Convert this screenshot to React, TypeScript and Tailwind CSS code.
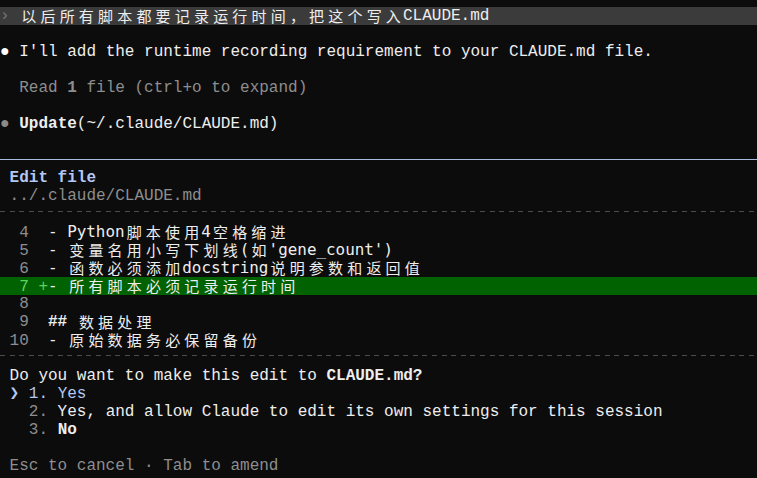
import React from 'react';

const isWide = (c: string) => /[\u2e80-\u9fff\uff00-\uffef]/.test(c);

// render text on the terminal grid: CJK glyphs take two cells
const Cells: React.FC<{ text: string; alt?: boolean }> = ({ text, alt }) => {
  const parts: React.ReactNode[] = [];
  let buf = '';
  const flush = (k: number) => {
    if (buf) {
      parts.push(
        <span key={'a' + k} className={alt ? "font-[family-name:'DejaVu_Sans_Mono',monospace] text-[15.9px]" : ''}>
          {buf}
        </span>
      );
      buf = '';
    }
  };
  Array.from(text).forEach((c, i) => {
    if (isWide(c)) {
      flush(i);
      parts.push(
        <span key={i} className="inline-block w-[19.2px] align-top text-center leading-[17px] font-[family-name:'Noto_Sans_CJK_SC',sans-serif] text-[15px]">
          {c}
        </span>
      );
    } else {
      buf += c;
    }
  });
  flush(text.length);
  return <>{parts}</>;
};

const Row: React.FC<{ children?: React.ReactNode; className?: string }> = ({ children, className = '' }) => (
  <div className={`h-[18px] whitespace-pre ${className}`}>{children}</div>
);

const diff = [
  { n: '4', sign: ' ', text: '- Python脚本使用4空格缩进' },
  { n: '5', sign: ' ', text: "- 变量名用小写下划线(如'gene_count')" },
  { n: '6', sign: ' ', text: '- 函数必须添加docstring说明参数和返回值' },
  { n: '7', sign: '+', text: '- 所有脚本必须记录运行时间', added: true },
  { n: '8', sign: ' ', text: '' },
  { n: '9', sign: ' ', text: '## 数据处理', heading: true },
  { n: '10', sign: ' ', text: '- 原始数据务必保留备份' },
];

const Dashed = () => (
  <Row className="flex items-start">
    <div className="mt-[6px] h-px w-full bg-[repeating-linear-gradient(90deg,#4c4c4c_0_5px,transparent_5px_9.6px)]" />
  </Row>
);

export default function App() {
  return (
    <div className="w-[757px] h-[478px] overflow-hidden bg-[#0c0c0c] pt-[7px] text-[16px] leading-[18px] text-[#eeeeee] font-[family-name:'Liberation_Mono','Noto_Sans_CJK_SC',monospace]">
      <Row className="bg-[#3b3b3b]">
        <span className="text-[#777]">›</span> <Cells text="以后所有脚本都要记录运行时间，把这个写入" />CLAUDE.md
      </Row>
      <Row />
      <Row>
        <span className="text-white">●</span> I'll add the runtime recording requirement to your CLAUDE.md file.
      </Row>
      <Row />
      <Row className="text-[#8e8e8e]">  Read <span className="font-bold">1</span> file (ctrl+o to expand)</Row>
      <Row />
      <Row>
        <span className="text-[#8a8a8a]">●</span> <span className="font-bold">Update</span>(~/.claude/CLAUDE.md)
      </Row>
      <Row />
      <Row className="flex items-start">
        <div className="mt-[8px] h-px w-full bg-[#a7bde0]" />
      </Row>
      <Row className="font-bold text-[#b4c8f4]"> Edit file</Row>
      <Row className="text-[#8e8e8e]"> ../.claude/CLAUDE.md</Row>
      <Dashed />
      {diff.map((d) => (
        <Row key={d.n} className={d.added ? 'bg-[#006200]' : ''}>
          <span className={d.added ? 'text-[#5fd25f]' : 'text-[#8e8e8e]'}>{' ' + d.n.padStart(2, ' ') + ' '}</span>
          <span className="text-[#5fd25f]">{d.sign}</span>
          {d.heading ? (
            <>
              <span className="font-bold">## </span>
              <Cells text="数据处理" />
            </>
          ) : (
            <Cells text={d.text} alt />
          )}
        </Row>
      ))}
      <Dashed />
      <Row> Do you want to make this edit to <span className="font-bold">CLAUDE.md?</span></Row>
      <Row className="text-[#b4c8f4]">
        {' '}<span className="font-bold">❯</span> 1. Yes
      </Row>
      <Row>
        {'   '}<span className="text-[#8e8e8e]">2.</span> Yes, and allow Claude to edit its own settings for this session
      </Row>
      <Row>
        {'   '}<span className="text-[#8e8e8e]">3.</span> <span className="font-bold">No</span>
      </Row>
      <Row />
      <Row className="text-[#8e8e8e]"> Esc to cancel · Tab to amend</Row>
    </div>
  );
}
